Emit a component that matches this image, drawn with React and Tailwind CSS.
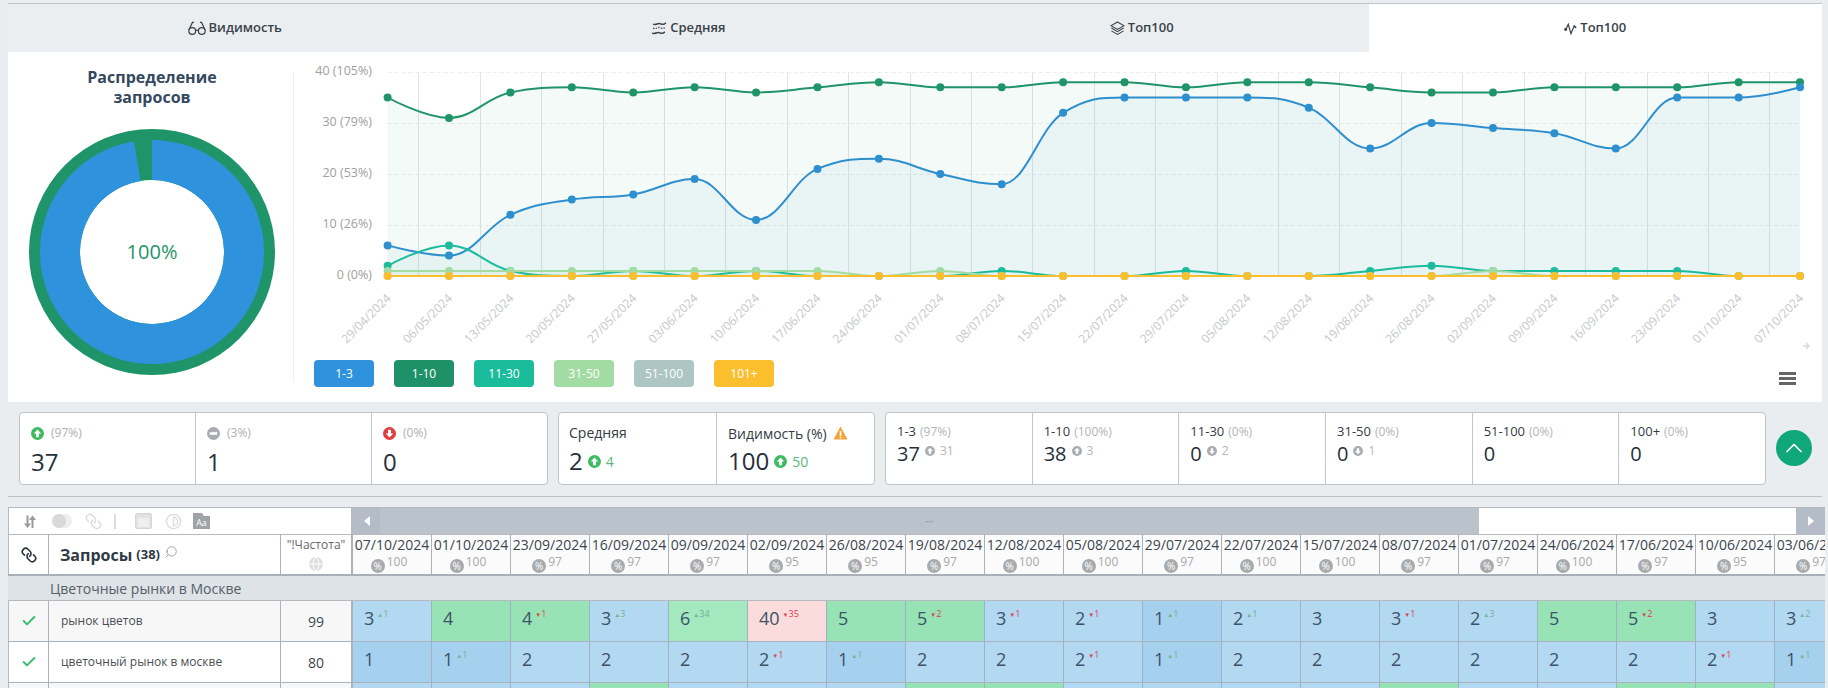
import React from "react";
import { Link, Search, Check, ChevronUp, Contrast } from "lucide-react";

const X0 = 387.6, DX = 61.41, Y0 = 276, DY = 5.1;
const dates = ["29/04/2024","06/05/2024","13/05/2024","20/05/2024","27/05/2024","03/06/2024","10/06/2024","17/06/2024","24/06/2024","01/07/2024","08/07/2024","15/07/2024","22/07/2024","29/07/2024","05/08/2024","12/08/2024","19/08/2024","26/08/2024","02/09/2024","09/09/2024","16/09/2024","23/09/2024","01/10/2024","07/10/2024"];
const series = [
  { color: "#1f9469", fill: 0.05, v: [35,31,36,37,36,37,36,37,38,37,37,38,38,37,38,38,37,36,36,37,37,37,38,38] },
  { color: "#2e8fcf", fill: 0.05, v: [6,4,12,15,16,19,11,21,23,20,18,32,35,35,35,33,25,30,29,28,25,35,35,37] },
  { color: "#1abc9c", fill: 0.02, v: [2,6,1,0,1,0,1,0,0,0,1,0,0,1,0,0,1,2,1,1,1,1,0,0] },
  { color: "#a3dca3", fill: 0.08, v: [1,1,1,1,1,1,1,1,0,1,0,0,0,0,0,0,0,0,1,0,0,0,0,0] },
  { color: "#aec6c3", fill: 0, v: Array(24).fill(0) },
  { color: "#fbbf2e", fill: 0, v: Array(24).fill(0) },
];
const px = (i) => X0 + DX * i;
const py = (v) => Y0 - DY * v;

function splinePath(v) {
  const pts = v.map((y, i) => [px(i), py(y)]);
  const ctrl = pts.map(([x, y], i) => {
    if (i === 0 || i === pts.length - 1) return { lx: x, ly: y, rx: x, ry: y };
    const [ax, ay] = pts[i - 1];
    const [bx, by] = pts[i + 1];
    let lx = (1.5 * x + ax) / 2.5, ly = (1.5 * y + ay) / 2.5;
    let rx = (1.5 * x + bx) / 2.5, ry = (1.5 * y + by) / 2.5;
    const c = ((ry - ly) * (rx - x)) / (rx - lx) + y - ry;
    ly += c; ry += c;
    if (ly > ay && ly > y) { ly = Math.max(ay, y); ry = 2 * y - ly; }
    else if (ly < ay && ly < y) { ly = Math.min(ay, y); ry = 2 * y - ly; }
    if (ry > by && ry > y) { ry = Math.max(by, y); ly = 2 * y - ry; }
    else if (ry < by && ry < y) { ry = Math.min(by, y); ly = 2 * y - ry; }
    return { lx, ly, rx, ry };
  });
  let d = `M${pts[0][0]} ${pts[0][1]}`;
  for (let i = 1; i < pts.length; i++) {
    d += ` C${ctrl[i - 1].rx} ${ctrl[i - 1].ry} ${ctrl[i].lx} ${ctrl[i].ly} ${pts[i][0]} ${pts[i][1]}`;
  }
  return d;
}

function Chart() {
  return (
    <svg viewBox="294 52 1528 308" width="1528" height="308" className="block" fontFamily="'Open Sans', sans-serif">
      {[0, 1, 2, 3, 4].map((k) => (
        <line key={k} x1={X0} x2={1800} y1={72.5 + 51 * k} y2={72.5 + 51 * k} stroke="#ececec" strokeDasharray="4 3" />
      ))}
      {dates.slice(0, 23).map((d, i) => {
        const x = Math.round(px(i) + DX / 2) + 0.5;
        return <line key={d} x1={x} x2={x} y1={72} y2={276} stroke="#e0e5e6" />;
      })}
      {["40 (105%)", "30 (79%)", "20 (53%)", "10 (26%)", "0 (0%)"].map((t, k) => (
        <text key={t} x={372} y={75 + 51 * k} textAnchor="end" fontSize="12.5" fill="#a0a0a0">{t}</text>
      ))}
      {series.map((s) => {
        const d = splinePath(s.v);
        return (
          <g key={s.color}>
            {s.fill > 0 && <path d={`${d} L1800 ${Y0} L${X0} ${Y0} Z`} fill={s.color} fillOpacity={s.fill} />}
            <path d={d} fill="none" stroke={s.color} strokeWidth="2" />
            {s.v.map((y, i) => <circle key={i} cx={px(i)} cy={py(y)} r="4" fill={s.color} />)}
          </g>
        );
      })}
      {dates.map((d, i) => (
        <text key={d} x={px(i) + 4} y={299} textAnchor="end" fontSize="12" fill="#c4c8cb" transform={`rotate(-45 ${px(i) + 4} 299)`}>{d}</text>
      ))}
      <path d="M1803 346h5M1806 343l3 3-3 3" fill="none" stroke="#d9dcde" strokeWidth="1.5" />
    </svg>
  );
}

function sector(cx, cy, r1, r0, a0, a1) {
  const p = (r, a) => [cx + r * Math.sin((a * Math.PI) / 180), cy - r * Math.cos((a * Math.PI) / 180)];
  const [x1, y1] = p(r1, a0), [x2, y2] = p(r1, a1), [x3, y3] = p(r0, a1), [x4, y4] = p(r0, a0);
  return `M${x1} ${y1} A${r1} ${r1} 0 1 1 ${x2} ${y2} L${x3} ${y3} A${r0} ${r0} 0 1 0 ${x4} ${y4} Z`;
}

function Donut() {
  return (
    <svg viewBox="0 0 246 246" width="246" height="246" className="block" fontFamily="'Open Sans', sans-serif">
      <circle cx="123" cy="123" r="123" fill="#1f9469" />
      <circle cx="123" cy="123" r="72" fill="#fff" />
      <path d={sector(123, 123, 112, 72, 0, 350.8)} fill="#2e93dc" />
      <text x="123" y="130" textAnchor="middle" fontSize="20" fontWeight="500" fill="#1f9469">100%</text>
    </svg>
  );
}

function RoundIcon({ kind, size = 13, color }) {
  return (
    <svg viewBox="0 0 14 14" width={size} height={size} className="shrink-0">
      <circle cx="7" cy="7" r="7" fill={color} />
      {kind === "up" && <path d="M7 2.6 11 7H8.6v4H5.4V7H3z" fill="#fff" />}
      {kind === "down" && <path d="M7 11.4 3 7h2.4V3h3.2v4H11z" fill="#fff" />}
      {kind === "minus" && <rect x="3" y="5.6" width="8" height="2.8" fill="#fff" />}
    </svg>
  );
}

const GlassesIcon = () => (
  <svg viewBox="0 0 18 16" width="18" height="16" fill="none" stroke="currentColor" strokeWidth="1.2">
    <circle cx="4.2" cy="11" r="3.4" /><circle cx="13.8" cy="11" r="3.4" />
    <path d="M7.6 10.6c.9-.7 1.9-.7 2.8 0M1 10 4.4 2.4H6M17 10 13.6 2.4H12" />
  </svg>
);
const WavesIcon = () => (
  <svg viewBox="0 0 16 16" width="16" height="16" fill="none" stroke="currentColor">
    <path d="M2 4c3 2 5-2 8 0 2 1 3 0 5-1" strokeWidth="1.4" />
    <path d="M2 8c3 2 5-2 8 0 2 1 3 0 5-1" strokeWidth="1.2" strokeDasharray="1.5 1.2" />
    <path d="M1 13c3 2 5-2 8 0 2 1 3 0 5-1" strokeWidth="1.4" />
  </svg>
);
const LayersIcon = () => (
  <svg viewBox="0 0 16 16" width="15" height="15" fill="none" stroke="currentColor" strokeWidth="1.1">
    <path d="M8 1 15 5 8 9 1 5z" />
    <path d="M1.5 7.5 8 11.3l6.5-3.8M1.5 10.5 8 14.3l6.5-3.8" />
  </svg>
);
const ActivityIcon = () => (
  <svg viewBox="0 0 14 16" width="13" height="15" fill="none" stroke="currentColor" strokeWidth="1.3">
    <circle cx="1.8" cy="9" r="1.6" fill="currentColor" stroke="none" />
    <path d="M2 9 4.6 3.5 7.5 13.5 11 5l1.2 1.6" />
    <circle cx="12.4" cy="6.6" r="1" fill="currentColor" stroke="none" />
  </svg>
);

function Tab({ icon, label, active }) {
  return (
    <div className={active ? "flex items-center justify-center gap-[3px] bg-white text-[#3a424a]" : "flex items-center justify-center gap-[3px] bg-[#ebeef0] text-[#3a424a]"}>
      {icon}
      <span className="text-[13px] font-semibold">{label}</span>
    </div>
  );
}

function Cell1({ icon, color, pct, value }) {
  return (
    <div className="flex-1 border-l border-[#c4c7ca] first:border-l-0 pl-[11px] pt-[12px]">
      <div className="flex items-center gap-[7px] h-[16px]">
        <RoundIcon kind={icon} color={color} />
        <span className="text-[12px] text-[#b0b0b0]">{pct}</span>
      </div>
      <div className="mt-[5px] text-[24px] leading-[32px] text-[#26303a]">{value}</div>
    </div>
  );
}

function Cell3({ label, pct, value, icon, delta }) {
  return (
    <div className="flex-1 border-l border-[#c4c7ca] first:border-l-0 pl-[11px] pt-[10px]">
      <div className="flex items-center gap-[4px] h-[18px] whitespace-nowrap">
        <span className="text-[13px] text-[#333b44]">{label}</span>
        <span className="text-[12px] text-[#b5b5b5]">{pct}</span>
      </div>
      <div className="flex items-start gap-[5px] h-[26px]">
        <span className="text-[20px] leading-[26px] text-[#26303a]">{value}</span>
        {delta && (
          <span className="flex items-center gap-[5px] mt-[3px] text-[12px] leading-[14px] text-[#b5b5b5]">
            <RoundIcon kind={icon} size={10} color="#a9adb1" />
            {delta}
          </span>
        )}
      </div>
    </div>
  );
}

const colHeads = [["07/10/2024",100],["01/10/2024",100],["23/09/2024",97],["16/09/2024",97],["09/09/2024",97],["02/09/2024",95],["26/08/2024",95],["19/08/2024",97],["12/08/2024",100],["05/08/2024",100],["29/07/2024",97],["22/07/2024",100],["15/07/2024",100],["08/07/2024",97],["01/07/2024",97],["24/06/2024",100],["17/06/2024",97],["10/06/2024",95],["03/06/2024",97]];
const row1 = [[3,-1],[4],[4,1],[3,-3],[6,-34],[40,35],[5],[5,2],[3,1],[2,1],[1,-1],[2,-1],[3],[3,1],[2,-3],[5],[5,2],[3],[3,-2]];
const row2 = [[1],[1,-1],[2],[2],[2],[2,1],[1,-1],[2],[2],[2,1],[1,-1],[2],[2],[2],[2],[2],[2],[2,1],[1,-1]];
const row3 = [[2],[2],[2],[5],[2],[2],[2],[5],[5],[2],[2],[2],[2],[5],[2],[2],[5],[5],[2]];

function bgFor(n) {
  if (n === 1) return "bg-[#a5d1ef]";
  if (n <= 3) return "bg-[#b3d8f1]";
  if (n === 6) return "bg-[#a3e8bf]";
  if (n <= 5) return "bg-[#98e3b5]";
  return "bg-[#fadcdc]";
}

function DataCell({ n, d, hideText }) {
  return (
    <div className={`w-[79px] shrink-0 h-full border-r border-[#9fb2c4] pl-[11px] pt-[5px] flex items-start ${bgFor(n)}`}>
      {!hideText && <span className="text-[18px] leading-[24px] text-[#3b5269]">{n}</span>}
      {d !== undefined && (
        <span className={d < 0 ? "ml-[3px] mt-[2px] text-[9px] leading-[12px] text-[#6db595] whitespace-nowrap" : "ml-[3px] mt-[2px] text-[9px] leading-[12px] text-[#d9434e] whitespace-nowrap"}>
          <span className="text-[6px]">{d < 0 ? "▲" : "▼"}</span>{Math.abs(d)}
        </span>
      )}
    </div>
  );
}

function Row({ q, freq, cells, odd, check = true, hideText = false }) {
  return (
    <div className="flex h-[41px] border-b border-[#a9b3bd]">
      <div className={odd ? "flex w-[345px] shrink-0 bg-[#f7f7f7] border-l border-[#b4bac0]" : "flex w-[345px] shrink-0 bg-white border-l border-[#b4bac0]"}>
        <div className="w-[40px] shrink-0 border-r border-[#a9b3bd] flex items-center justify-center">
          {check && <Check size={16} strokeWidth={3} className="text-[#3fbb70]" />}
        </div>
        <div className="w-[232px] shrink-0 border-r border-[#a9b3bd] pl-[12px] flex items-center text-[12px] text-[#4a4f55]">{q}</div>
        <div className="flex-1 flex items-center justify-center text-[14px] text-[#3c4650] border-r-2 border-[#a9b3bd]">{freq}</div>
      </div>
      {cells.map((c, i) => <DataCell key={i} n={c[0]} d={c[1]} hideText={hideText} />)}
    </div>
  );
}

export default function App() {
  return (
    <div className="w-[1828px] h-[688px] overflow-hidden bg-[#e9edf0] font-['Open_Sans'] pt-[3px]">
      <div className="ml-[8px] mr-[6px] border-t border-[#c3c7ca] border-b border-b-[#bcc1c5]">
        <div className="grid grid-cols-4 h-[48px]">
          <Tab icon={<GlassesIcon />} label="Видимость" />
          <Tab icon={<WavesIcon />} label="Средняя" />
          <Tab icon={<LayersIcon />} label="Топ100" />
          <Tab icon={<ActivityIcon />} label="Топ100" active />
        </div>

        <div className="flex h-[350px] bg-white">
          <div className="w-[285px] shrink-0 pt-[15px]">
            <div className="w-[288px] text-center text-[16px] font-bold leading-[20px] text-[#34495e]">Распределение<br />запросов</div>
            <div className="ml-[21px] mt-[22px]"><Donut /></div>
          </div>
          <div className="w-px h-[310px] mt-[20px] bg-[#f0f0f0] shrink-0" />
          <div className="flex-1 min-w-0">
            <Chart />
            <div className="flex items-end justify-between pl-[20px] pr-[26px]">
              <div className="flex gap-[20px]">
                {[["1-3","bg-[#2e93dc]"],["1-10","bg-[#1f9168]"],["11-30","bg-[#1abc9c]"],["31-50","bg-[#a3dca3]"],["51-100","bg-[#aec6c3]"],["101+","bg-[#fbbf2e]"]].map(([t, c]) => (
                  <div key={t} className={`w-[60px] h-[27px] rounded-[4px] flex items-center justify-center text-[12px] text-white ${c}`}>{t}</div>
                ))}
              </div>
              <div className="flex flex-col gap-[2px] mb-[2px] w-[17px]">
                <div className="h-[3px] bg-[#666]" />
                <div className="h-[3px] bg-[#666]" />
                <div className="h-[3px] bg-[#666]" />
              </div>
            </div>
          </div>
        </div>

        <div className="flex items-start h-[94px] pl-[11px] pt-[10px] gap-[10px]">
          <div className="flex w-[529px] h-[73px] shrink-0 bg-white border border-[#c0c3c6] rounded-[4px]">
            <Cell1 icon="up" color="#3fbb5f" pct="(97%)" value="37" />
            <Cell1 icon="minus" color="#a9adb1" pct="(3%)" value="1" />
            <Cell1 icon="down" color="#de3f3f" pct="(0%)" value="0" />
          </div>
          <div className="flex w-[317px] h-[73px] shrink-0 bg-white border border-[#c0c3c6] rounded-[4px]">
            <div className="w-[157px] shrink-0 pl-[10px] pt-[11px]">
              <div className="text-[14px] leading-[18px] text-[#333b44]">Средняя</div>
              <div className="flex items-center gap-[5px] mt-[3px] h-[32px]">
                <span className="text-[24px] text-[#26303a]">2</span>
                <RoundIcon kind="up" color="#3fbb5f" />
                <span className="text-[14px] text-[#5cb87a]">4</span>
              </div>
            </div>
            <div className="flex-1 border-l border-[#c4c7ca] pl-[11px] pt-[11px]">
              <div className="flex items-center gap-[6px] h-[18px] whitespace-nowrap">
                <span className="text-[14px] text-[#333b44]">Видимость (%)</span>
                <svg viewBox="0 0 14 14" width="15" height="14"><path d="M7 0.5 14 13.5H0z" fill="#f0a43a" /><rect x="6.2" y="5" width="1.6" height="5" fill="#fff" /><rect x="6.2" y="10.8" width="1.6" height="1.6" fill="#fff" /></svg>
              </div>
              <div className="flex items-center gap-[5px] mt-[3px] h-[32px]">
                <span className="text-[24px] text-[#26303a]">100</span>
                <RoundIcon kind="up" color="#3fbb5f" />
                <span className="text-[14px] text-[#5cb87a]">50</span>
              </div>
            </div>
          </div>
          <div className="flex w-[881px] h-[73px] shrink-0 bg-white border border-[#c0c3c6] rounded-[4px]">
            <Cell3 label="1-3" pct="(97%)" value="37" icon="up" delta="31" />
            <Cell3 label="1-10" pct="(100%)" value="38" icon="up" delta="3" />
            <Cell3 label="11-30" pct="(0%)" value="0" icon="down" delta="2" />
            <Cell3 label="31-50" pct="(0%)" value="0" icon="down" delta="1" />
            <Cell3 label="51-100" pct="(0%)" value="0" />
            <Cell3 label="100+" pct="(0%)" value="0" />
          </div>
          <div className="w-[36px] h-[36px] mt-[18px] rounded-full bg-[#10a87a] flex items-center justify-center shrink-0">
            <ChevronUp size={28} strokeWidth={1.5} className="text-white" />
          </div>
        </div>
      </div>

      <div className="ml-[8px] mt-[10px] w-[1817px] overflow-hidden">
        <div className="flex h-[28px] border-t border-[#b4bac0]">
          <div className="w-[345px] shrink-0 bg-white border-l border-r-2 border-b border-[#b4bac0] flex items-center pl-[14px]">
            <svg viewBox="0 0 14 14" width="14" height="15"><path d="M3.5 1h2v8h2.500L4.500 13.500 1 9h2.500zM10.500 13.500h-2v-8H6L9.500 1 13 5.500h-2.500z" fill="#9a9a9a" /></svg>
            <div className="w-[20px] h-[14px] ml-[15px] rounded-full bg-[#eeeeee] flex items-center"><div className="w-[14px] h-[14px] rounded-full bg-[#d9d9d9]" /></div>
            <Link size={17} strokeWidth={2} className="text-[#dcdcdc] ml-[13px] rotate-90" />
            <div className="w-[2px] h-[15px] bg-[#dcdcdc] ml-[12px]" />
            <div className="w-[17px] h-[16px] bg-[#e2e2e2] border border-[#d6d6d6] rounded-[2px] flex items-center justify-center ml-[19px]"><div className="w-[11px] h-[9px] bg-[#efefef] mt-[2px]" /></div>
            <Contrast size={17} strokeWidth={2} className="text-[#dedede] ml-[13px]" />
            <svg viewBox="0 0 17 16" width="17" height="16" className="ml-[11px]" fontFamily="'Open Sans', sans-serif">
              <path d="M0 0h9l2 3h6v13H0z" fill="#9ea3a8" />
              <text x="8.500" y="13" textAnchor="middle" fontSize="9" fill="#fff">Aa</text>
            </svg>
          </div>
          <div className="flex-1 flex bg-white border-b border-[#b4bac0]">
            <div className="w-[27px] shrink-0 bg-[#b4bcc7] flex items-center justify-center">
              <svg viewBox="0 0 6 10" width="6" height="10"><path d="M6 0v10L0 5z" fill="#fff" /></svg>
            </div>
            <div className="w-[1099px] shrink-0 bg-[#bac2cc] flex items-center justify-center text-[10px] leading-none text-[#7f8791]">···</div>
            <div className="flex-1" />
            <div className="w-[29px] shrink-0 bg-[#b4bcc7] flex items-center justify-center">
              <svg viewBox="0 0 6 10" width="6" height="10"><path d="M0 0v10l6-5z" fill="#fff" /></svg>
            </div>
          </div>
        </div>

        <div className="flex h-[41px] border-b-2 border-[#a9b0b8]">
          <div className="flex w-[345px] shrink-0 bg-white border-l border-[#b4bac0]">
            <div className="w-[40px] shrink-0 border-r border-[#a9b3bd] flex items-center justify-center">
              <Link size={16} strokeWidth={2.4} className="text-[#2b333b] rotate-90" />
            </div>
            <div className="w-[232px] shrink-0 border-r border-[#a9b3bd] pl-[11px] flex items-center gap-[4px]">
              <span className="text-[16px] font-bold text-[#2f3a45]">Запросы</span>
              <span className="text-[13px] font-bold text-[#2f3a45]">(38)</span>
              <Search size={14} strokeWidth={1.3} className="text-[#8c8c8c] -scale-x-100 -mt-[5px]" />
            </div>
            <div className="flex-1 flex flex-col items-center border-r-2 border-[#a9b3bd] pt-[1px]">
              <span className="text-[12px] leading-[17px] text-[#666]">"!Частота"</span>
              <svg viewBox="0 0 14 14" width="14" height="14" className="mt-[4px]"><circle cx="7" cy="7" r="7" fill="#dedede" /><path d="M0 7h14M7 0c-4 4-4 10 0 14M7 0c4 4 4 10 0 14" fill="none" stroke="#fff" strokeWidth="1" /></svg>
            </div>
          </div>
          {colHeads.map(([d, p]) => (
            <div key={d} className="w-[79px] shrink-0 bg-[#fbfbfb] border-r border-[#a9b3bd] flex flex-col items-center pt-[1px]">
              <span className="text-[14px] leading-[18px] text-[#3c4650] whitespace-nowrap">{d}</span>
              <div className="flex items-start gap-[2px] mt-[2px] -ml-[6px]">
                <span className="w-[14px] h-[14px] mt-[3px] rounded-full bg-[#a8abae] flex items-center justify-center text-[10px] leading-none text-white">%</span>
                <span className="text-[12px] leading-[12px] text-[#a8a8a8]">{p}</span>
              </div>
            </div>
          ))}
        </div>

        <div className="h-[25px] bg-[#dde3e7] border-b border-[#b4bac0] pl-[42px] flex items-center text-[14px] text-[#565f68]">Цветочные рынки в Москве</div>

        <Row q="рынок цветов" freq="99" cells={row1} odd />
        <Row q="цветочный рынок в москве" freq="80" cells={row2} />
        <Row q="" freq="" cells={row3} odd check={false} hideText />
      </div>
    </div>
  );
}
